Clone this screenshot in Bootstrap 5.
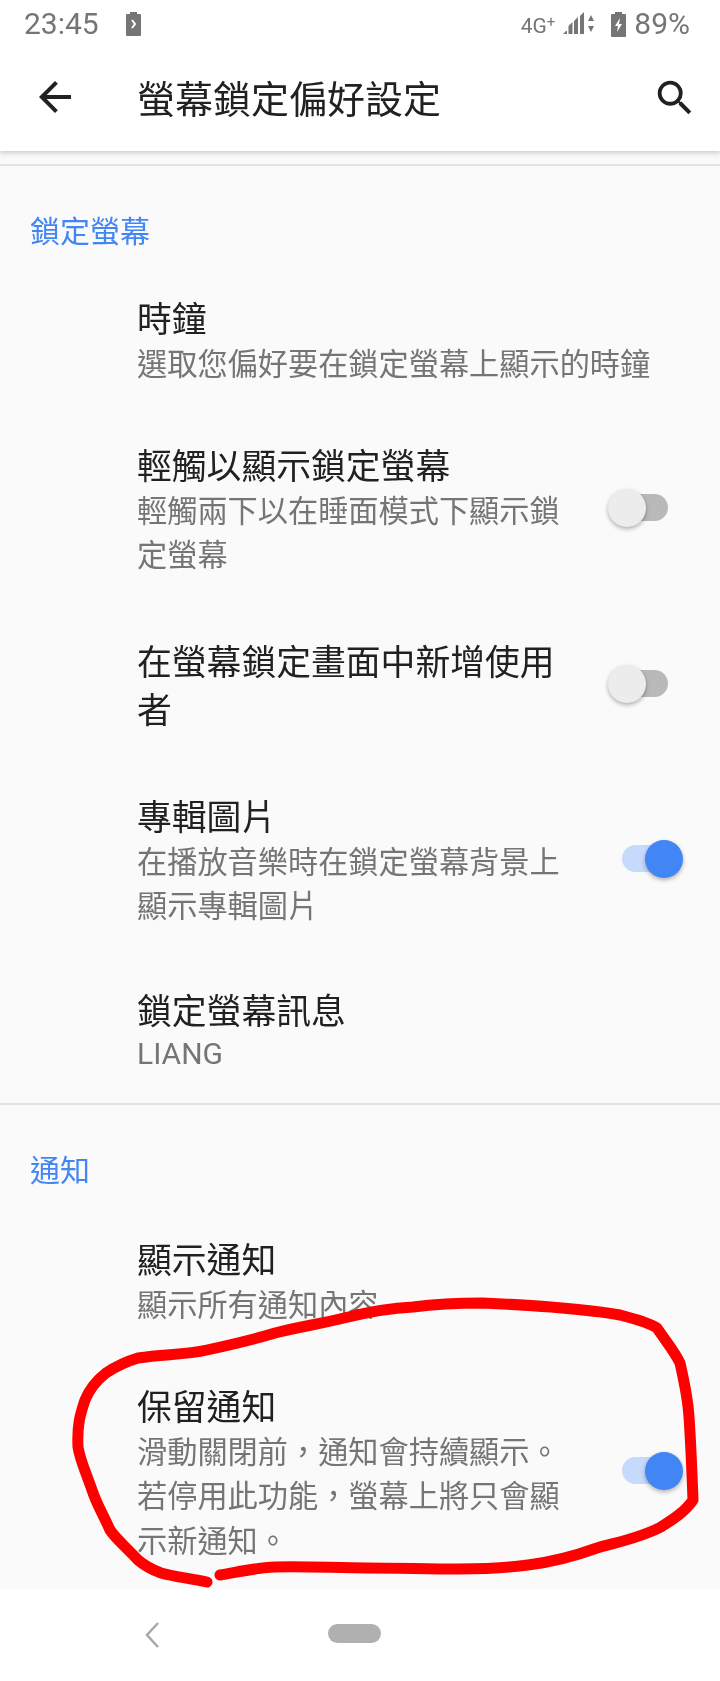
<!DOCTYPE html>
<html lang="zh-Hant">
<head>
    <meta charset="UTF-8">
    <title>螢幕鎖定偏好設定</title>
    <link href="https://cdn.jsdelivr.net/npm/bootstrap@5.3.3/dist/css/bootstrap.min.css" rel="stylesheet">
    <style>
        html, body { margin: 0; background: #fafafa; }
        body { font-family: "Noto Sans CJK TC", "Noto Sans", sans-serif; }
        /* the source is a slightly soft upscaled phone capture */
        .phone-page { width: 720px; height: 1681px; overflow: hidden; background: #fafafa; filter: blur(.5px); }

        .status-row { height: 48px; background: #fff; color: #757575; padding: 0 30px 0 24px; font-family: Roboto, sans-serif; position: relative; z-index: 2; }
        .status-time { font-size: 30px; width: 102px; line-height: 44px; }
        .status-pct { font-size: 30px; line-height: 44px; }
        .status-net { font-size: 21px; line-height: 44px; }
        .status-plus { font-size: 15px; vertical-align: 6px; }

        .app-head { height: 103px; background: #fff; box-shadow: 0 2px 5px rgba(0,0,0,.2); color: #212121; position: relative; z-index: 1; }
        .head-back { width: 137px; }
        .back-icon { margin-left: 31px; margin-top: -6px; }
        .head-title { font-size: 38px; line-height: 46px; padding-bottom: 6px; }
        .head-search { padding-right: 22px; padding-bottom: 4px; }

        .first-line { height: 2px; background: #e2e2e2; margin-top: 13px; }
        .section-name { color: #4285f4; font-size: 30px; line-height: 40px; padding-left: 30px; }
        .sec-a { margin-top: 43px; margin-bottom: 45px; }
        .sec-b { margin-top: 43px; margin-bottom: 47px; }

        .pref-row { padding-left: 137px; padding-right: 30px; }
        .pref-text { width: 438px; }
        .pref-wide { width: 553px; }
        .pref-name { color: #212121; font-size: 34.8px; line-height: 46px; }
        .pref-tall { line-height: 48px; }
        .pref-note { color: #757575; font-size: 30.2px; line-height: 44.5px; }
        .pref-latin { font-family: Roboto, sans-serif; font-size: 30px; }
        .gap-a { margin-top: 56px; }
        .gap-b { margin-top: 60px; }
        .gap-d { margin-top: 59px; }
        .gap-c { margin-top: 27px; }

        .switch-box { position: relative; width: 120px; height: 38px; }
        .switch-rail { position: absolute; top: 5px; height: 27px; border-radius: 14px; }
        .switch-knob { position: absolute; top: 0; width: 38px; height: 38px; border-radius: 50%; box-shadow: 0 2px 4px rgba(0,0,0,.3); }
        .is-off .switch-rail { left: 51px; width: 46px; background: #b9b9b9; }
        .is-off .switch-knob { left: 37px; background: #ececec; }
        .is-on .switch-rail { left: 51px; width: 46px; background: #c6dafc; }
        .is-on .switch-knob { left: 74px; background: #4285f4; }

        .line-mid { height: 2px; background: #e2e2e2; }

        .bottom-nav { position: absolute; left: 0; right: 0; top: 1589px; height: 92px; background: #fff; }
        .nav-pill { position: absolute; left: 328px; top: 35px; width: 53px; height: 19px; border-radius: 10px; background: #b0b0b0; }
        .nav-chev { position: absolute; left: 143px; top: 31px; }
        .ink-layer { position: absolute; left: 0; top: 0; z-index: 3; pointer-events: none; }
    </style>
</head>
<body>
<div class="phone-page position-relative">

    <div class="status-row d-flex align-items-center">
        <span class="status-time">23:45</span>
        <svg width="15" height="24" viewBox="0 0 15 24"><path fill="#757575" d="M4 0h7v2h3a1 1 0 0 1 1 1v20a1 1 0 0 1-1 1H1a1 1 0 0 1-1-1V3a1 1 0 0 1 1-1h3z"/><path fill="none" stroke="#fff" stroke-width="2" d="M6 8l3 4-3 4"/></svg>
        <span class="status-net ms-auto">4G<span class="status-plus">+</span></span>
        <svg class="ms-2" width="32" height="24" viewBox="0 0 32 24"><path fill="#757575" d="M0 22l3-3h1v3zM5.500 22v-8l4-4v12zM11 22V9l4-4v17zM17 22V4l4-4v22z"/><path fill="#757575" d="M28 3l3 6h-6zM28 20l-3-6h6z"/></svg>
        <svg class="ms-3" width="15" height="25" viewBox="0 0 15 25"><path fill="#757575" d="M4 0h7v2h3a1 1 0 0 1 1 1v21a1 1 0 0 1-1 1H1a1 1 0 0 1-1-1V3a1 1 0 0 1 1-1h3z"/><path fill="#fff" d="M9 6L4 14h3l-1 6 5-8H8z"/></svg>
        <span class="status-pct ms-2">89%</span>
    </div>

    <div class="app-head d-flex align-items-center">
        <div class="head-back d-flex">
            <svg class="back-icon" width="48" height="48" viewBox="0 0 24 24"><path fill="#212121" d="M20 11H7.830l5.590-5.590L12 4l-8 8 8 8 1.410-1.410L7.830 13H20v-2z"/></svg>
        </div>
        <div class="head-title flex-grow-1">螢幕鎖定偏好設定</div>
        <div class="head-search d-flex">
            <svg width="46" height="46" viewBox="0 0 24 24"><path fill="#212121" d="M15.500 14h-.79l-.28-.27A6.470 6.470 0 0 0 16 9.500 6.500 6.500 0 1 0 9.500 16c1.610 0 3.090-.59 4.230-1.570l.27.28v.79l5 4.990L20.490 19l-4.990-5zm-6 0C7.010 14 5 11.990 5 9.500S7.010 5 9.500 5 14 7.010 14 9.500 11.990 14 9.500 14z"/></svg>
        </div>
    </div>

    <div class="first-line"></div>
    <div class="section-name sec-a">鎖定螢幕</div>

    <div class="pref-row d-flex align-items-center">
        <div class="pref-wide">
            <div class="pref-name">時鐘</div>
            <div class="pref-note">選取您偏好要在鎖定螢幕上顯示的時鐘</div>
        </div>
    </div>

    <div class="pref-row d-flex align-items-center gap-a">
        <div class="pref-text">
            <div class="pref-name">輕觸以顯示鎖定螢幕</div>
            <div class="pref-note">輕觸兩下以在睡面模式下顯示鎖定螢幕</div>
        </div>
        <div class="switch-box is-off"><div class="switch-rail"></div><div class="switch-knob"></div></div>
    </div>

    <div class="pref-row d-flex align-items-center gap-b">
        <div class="pref-text">
            <div class="pref-name pref-tall">在螢幕鎖定畫面中新增使用者</div>
        </div>
        <div class="switch-box is-off"><div class="switch-rail"></div><div class="switch-knob"></div></div>
    </div>

    <div class="pref-row d-flex align-items-center gap-b">
        <div class="pref-text">
            <div class="pref-name">專輯圖片</div>
            <div class="pref-note">在播放音樂時在鎖定螢幕背景上顯示專輯圖片</div>
        </div>
        <div class="switch-box is-on"><div class="switch-rail"></div><div class="switch-knob"></div></div>
    </div>

    <div class="pref-row d-flex align-items-center gap-d">
        <div class="pref-wide">
            <div class="pref-name">鎖定螢幕訊息</div>
            <div class="pref-note pref-latin">LIANG</div>
        </div>
    </div>

    <div class="line-mid gap-c"></div>
    <div class="section-name sec-b">通知</div>

    <div class="pref-row d-flex align-items-center">
        <div class="pref-wide">
            <div class="pref-name">顯示通知</div>
            <div class="pref-note">顯示所有通知內容</div>
        </div>
    </div>

    <div class="pref-row d-flex align-items-center gap-a">
        <div class="pref-text">
            <div class="pref-name">保留通知</div>
            <div class="pref-note">滑動關閉前，通知會持續顯示。若停用此功能，螢幕上將只會顯示新通知。</div>
        </div>
        <div class="switch-box is-on"><div class="switch-rail"></div><div class="switch-knob"></div></div>
    </div>

    <div class="bottom-nav">
        <svg class="nav-chev" width="18" height="30" viewBox="0 0 18 30"><path fill="none" stroke="#a8a8a8" stroke-width="2.500" d="M15 3L4 15l11 12"/></svg>
        <div class="nav-pill"></div>
    </div>

    <!-- red marker circle drawn on top of the screenshot -->
    <svg class="ink-layer" width="720" height="1681" viewBox="0 0 720 1681">
        <path fill="none" stroke="#fe0000" stroke-width="11" stroke-linecap="round" stroke-linejoin="round"
              d="M207 1582C190 1578 175 1577 161 1573C150 1569 145 1566 138 1560C125 1546 117 1540 110 1530C101 1510 97 1505 92 1490C85 1470 80 1460 78 1447C77 1425 80 1415 85 1400C90 1388 97 1380 106 1373C118 1365 128 1361 138 1358C165 1354 185 1355 207 1350C230 1345 252 1340 275 1333C298 1327 320 1324 344 1318C368 1312 390 1308 413 1307C436 1304 460 1303 482 1303C505 1304 528 1305 551 1307C575 1309 600 1311 620 1315C635 1319 648 1322 657 1328C665 1340 675 1352 680 1363C685 1385 688 1400 689 1417C691 1445 692 1475 693 1500C685 1512 672 1520 661 1527C640 1538 618 1542 597 1548C575 1556 552 1562 528 1565C505 1568 482 1569 459 1569C428 1569 398 1568 367 1568C336 1568 305 1566 275 1567C255 1568 238 1572 220 1575"/>
    </svg>
</div>
<script src="https://cdn.jsdelivr.net/npm/bootstrap@5.3.3/dist/js/bootstrap.bundle.min.js"></script>
</body>
</html>
